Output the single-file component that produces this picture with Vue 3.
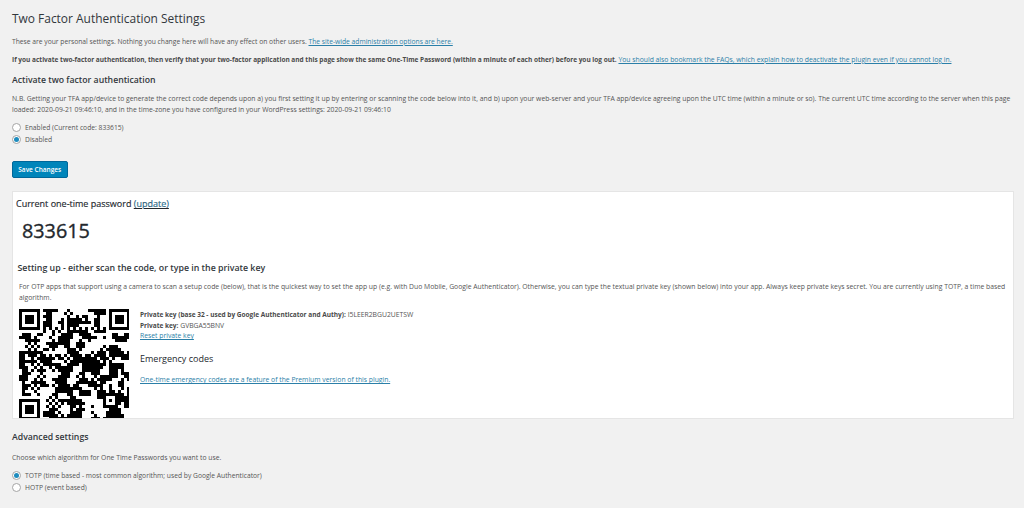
<script setup>
const SIZE = 37
let seed = 833615
const rand = () => {
  seed = (seed + 0x6d2b79f5) | 0
  let t = Math.imul(seed ^ (seed >>> 15), 1 | seed)
  t = (t + Math.imul(t ^ (t >>> 7), 61 | t)) ^ t
  return ((t ^ (t >>> 14)) >>> 0) / 4294967296
}
const noise = Array.from({ length: SIZE }, () => Array.from({ length: SIZE }, () => rand() < 0.52))
const at = (x, y) => noise[Math.max(0, Math.min(SIZE - 1, y))][Math.max(0, Math.min(SIZE - 1, x))]
const inFinder = (x, y, ox, oy) => x >= ox && x < ox + 7 && y >= oy && y < oy + 7
const finder = (x, y) => {
  const dx = Math.abs(x - 3)
  const dy = Math.abs(y - 3)
  const d = Math.max(dx, dy)
  return d !== 2
}
const isDark = (x, y) => {
  if (inFinder(x, y, 0, 0)) return finder(x, y)
  if (inFinder(x, y, 30, 0)) return finder(x - 30, y)
  if (inFinder(x, y, 0, 30)) return finder(x, y - 30)
  if ((x <= 7 && y <= 7) || (x >= 29 && y <= 7) || (x <= 7 && y >= 29)) return false
  if (x >= 28 && x <= 32 && y >= 28 && y <= 32) {
    return x === 28 || x === 32 || y === 28 || y === 32 || (x === 30 && y === 30)
  }
  if (y === 6) return x % 2 === 0
  if (x === 6) return y % 2 === 0
  // Favour runs of the same colour, as in the blocky reference code.
  const near = [at(x - 1, y), at(x + 1, y), at(x, y - 1), at(x, y + 1)].filter(Boolean).length
  return near >= 3 ? true : near <= 1 ? false : at(x, y)
}
const cells = []
for (let y = 0; y < SIZE; y++) {
  for (let x = 0; x < SIZE; x++) {
    if (isDark(x, y)) cells.push({ x, y })
  }
}
</script>

<template>
  <div class="page">
    <h1>Two Factor Authentication Settings</h1>
    <p class="intro">These are your personal settings. Nothing you change here will have any effect on other users. <a href="#">The site-wide administration options are here.</a></p>
    <p class="warn"><strong>If you activate two-factor authentication, then verify that your two-factor application and this page show the same One-Time Password (within a minute of each other) before you log out.</strong> <a href="#">You should also bookmark the FAQs, which explain how to deactivate the plugin even if you cannot log in.</a></p>
    <h2>Activate two factor authentication</h2>
    <p class="nb">N.B. Getting your TFA app/device to generate the correct code depends upon a) you first setting it up by entering or scanning the code below into it, and b) upon your web-server and your TFA app/device agreeing upon the UTC time (within a minute or so). The current UTC time according to the server when this page loaded: 2020-09-21 09:46:10, and in the time-zone you have configured in your WordPress settings: 2020-09-21 09:46:10</p>
    <div class="radios">
      <label class="radio"><span class="dot"></span>Enabled (Current code: 833615)</label>
      <label class="radio"><span class="dot on"></span>Disabled</label>
    </div>
    <button class="save">Save Changes</button>

    <section class="card">
      <h3 class="otp-title">Current one-time password <a href="#">(update)</a></h3>
      <div class="code">833615</div>
      <h3 class="setup">Setting up - either scan the code, or type in the private key</h3>
      <p class="desc">For OTP apps that support using a camera to scan a setup code (below), that is the quickest way to set the app up (e.g. with Duo Mobile, Google Authenticator). Otherwise, you can type the textual private key (shown below) into your app. Always keep private keys secret. You are currently using TOTP, a time based algorithm.</p>
      <div class="keys">
        <svg class="qr" viewBox="0 0 37 37" shape-rendering="crispEdges" aria-label="QR code">
          <rect v-for="c in cells" :key="c.x + '-' + c.y" :x="c.x" :y="c.y" width="1" height="1" fill="#000" />
        </svg>
        <div class="info">
          <div class="line"><strong>Private key (base 32 - used by Google Authenticator and Authy):</strong> I5LEER2BGU2UETSW</div>
          <div class="line"><strong>Private key:</strong> GVBGA55BNV</div>
          <div class="line"><a href="#">Reset private key</a></div>
          <h3 class="emergency">Emergency codes</h3>
          <a href="#">One-time emergency codes are a feature of the Premium version of this plugin.</a>
        </div>
      </div>
    </section>

    <h2 class="adv">Advanced settings</h2>
    <p class="choose">Choose which algorithm for One Time Passwords you want to use.</p>
    <div class="radios algo">
      <label class="radio"><span class="dot on"></span>TOTP (time based - most common algorithm; used by Google Authenticator)</label>
      <label class="radio"><span class="dot"></span>HOTP (event based)</label>
    </div>
  </div>
</template>

<style>
html, body { margin: 0; background: #f1f1f1; }
</style>

<style scoped>
.page {
  box-sizing: border-box;
  width: 1024px;
  height: 508px;
  overflow: hidden;
  padding: 0 10.5px 0 12px;
  background: #f1f1f1;
  color: #555;
  font-family: "Open Sans", "Noto Sans", sans-serif;
  font-size: 6.8px;
  line-height: 11px;
}
h1 {
  margin: 0;
  padding-top: 11px;
  font-size: 11.95px;
  line-height: 16px;
  font-weight: 400;
  color: #32373c;
}
a { color: #2b7fa8; text-decoration: underline; }
p { margin: 0; }
strong { font-size: 6.5px; font-weight: 700; color: #4a4a4a; }
.intro { margin-top: 9px; font-size: 6.73px; }
.warn { margin-top: 7px; }
h2 {
  margin: 8px 0 0;
  font-size: 8.7px;
  line-height: 14px;
  font-weight: 600;
  color: #32373c;
}
.nb { margin-top: 6px; }
.radios { margin-top: 7px; display: flex; flex-direction: column; font-size: 6.72px; }
.radio { display: flex; align-items: center; height: 11.6px; }
.dot {
  box-sizing: border-box;
  flex: none;
  width: 9px;
  height: 9px;
  margin-right: 4px;
  border: 1px solid #a5a5a5;
  border-radius: 50%;
  background: #fff;
  display: flex;
  align-items: center;
  justify-content: center;
}
.dot.on::after {
  content: "";
  width: 5px;
  height: 5px;
  border-radius: 50%;
  background: #1e8cbe;
}
.save {
  display: block;
  margin-top: 16px;
  padding: 0;
  width: 55.5px;
  height: 17px;
  border: 1px solid #006799;
  border-radius: 2px;
  background: #0085ba;
  color: #fff;
  font: 600 6.5px "Open Sans", sans-serif;
}
.card {
  box-sizing: border-box;
  height: 228px;
  margin-top: 13px;
  padding: 5px 3px 0;
  background: #fff;
  border: 1px solid #e5e5e5;
  overflow: hidden;
}
.card h3 { margin: 0; font-weight: 400; color: #23282d; }
.otp-title { font-size: 9px; line-height: 14px; -webkit-text-stroke: 0.15px #23282d; }
.code {
  margin: 7px 0 0 6px;
  font-size: 19.8px;
  line-height: 26px;
  color: #23282d;
  -webkit-text-stroke: 0.35px #23282d;
}
.card .setup { margin: 17px 0 0 1.5px; font-size: 8.8px; line-height: 14px; font-weight: 600; color: #32373c; }
.desc { margin: 6px 0 0 3px; }
.keys { display: flex; gap: 11px; margin-top: 5.5px; margin-left: 2.5px; }
.qr { width: 110.5px; height: 110.5px; flex: none; }
.info { padding-top: 1.5px; }
.line { line-height: 10.5px; }
.card .emergency { margin: 10.5px 0 8px; font-size: 9px; line-height: 14px; }
h2.adv { margin-top: 11px; }
.choose { margin-top: 8px; }
.algo { margin-top: 7px; }
</style>
